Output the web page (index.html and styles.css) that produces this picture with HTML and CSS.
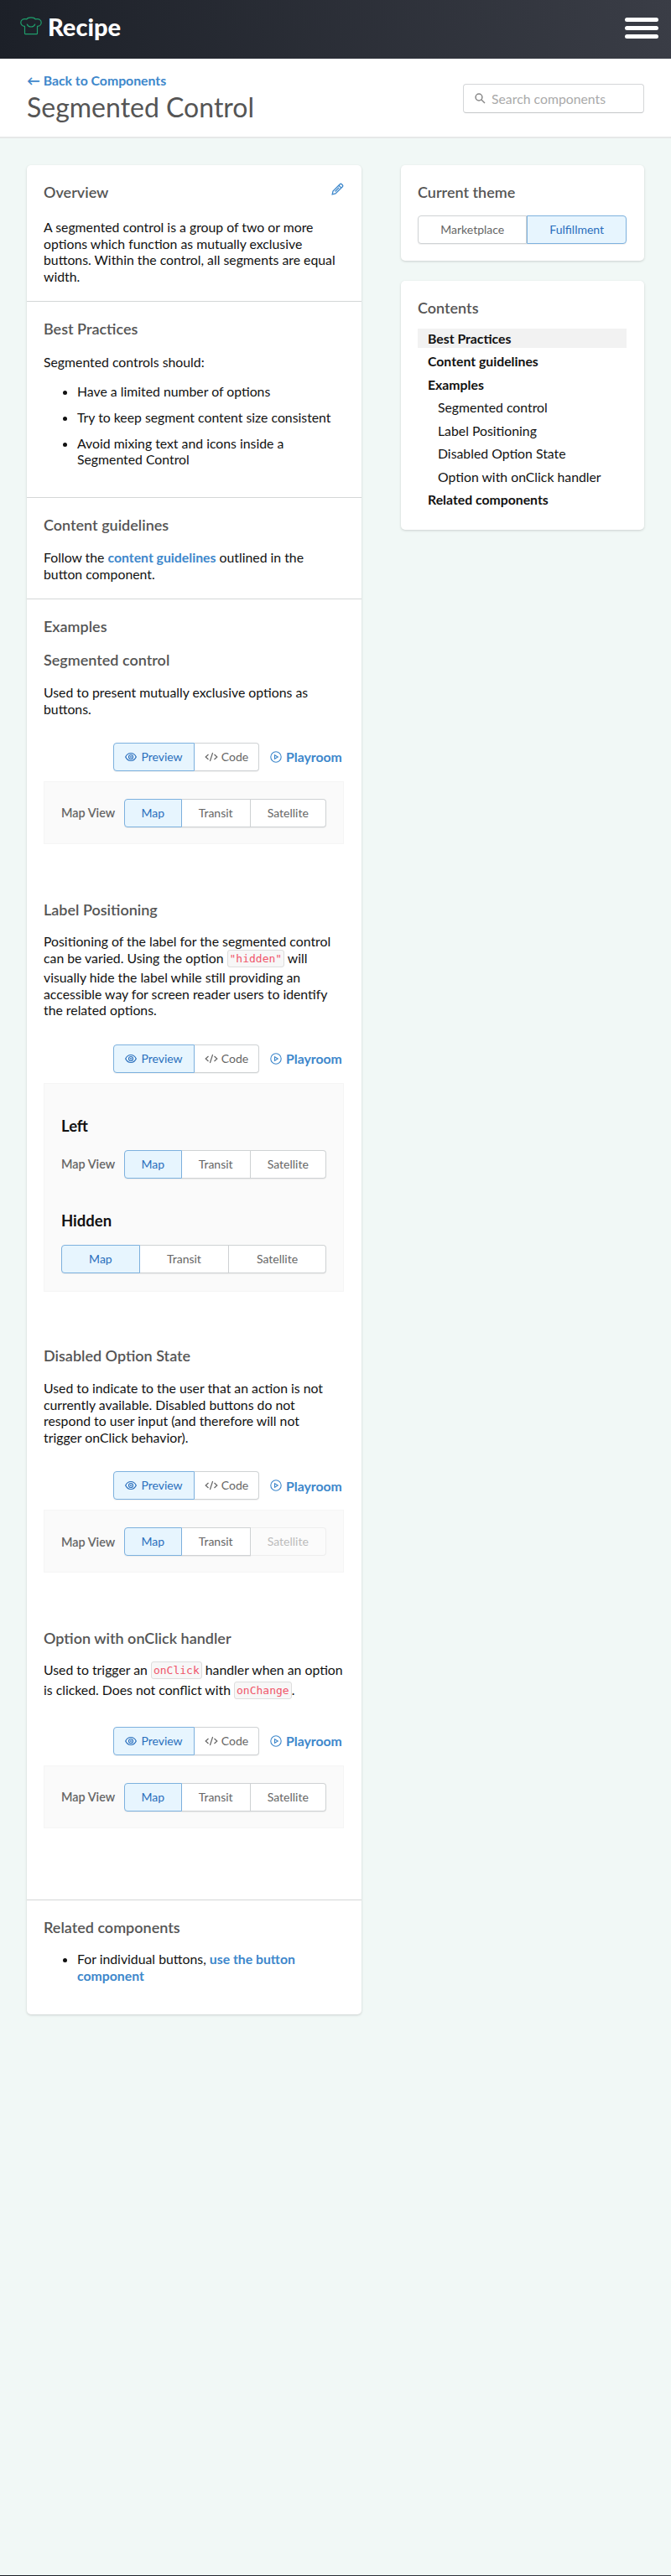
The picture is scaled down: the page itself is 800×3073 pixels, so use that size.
FILE: index.html
```html
<!DOCTYPE html>
<html lang="en">
<head>
<meta charset="utf-8">
<title>Segmented Control</title>
<link rel="stylesheet" href="styles.css">
</head>
<body>
<svg class="sprite" aria-hidden="true">
  <symbol id="eye" viewBox="0 0 14 12"><g fill="none" stroke="currentColor" stroke-width="1.2"><path d="M.7 6C2 3.2 4.200 1.500 7 1.500S12 3.200 13.300 6C12 8.800 9.800 10.500 7 10.500S2 8.800.7 6z"/><circle cx="7" cy="6" r="2.500"/></g><circle cx="7" cy="6" r=".9" fill="currentColor"/></symbol>
  <symbol id="code" viewBox="0 0 16 12"><path d="M4.500 3 1.200 6l3.300 3M11.500 3l3.300 3-3.300 3M9.600 1 6.400 11" fill="none" stroke="currentColor" stroke-width="1.200"/></symbol>
  <symbol id="play" viewBox="0 0 14 14"><circle cx="7" cy="7" r="6.200" fill="none" stroke="currentColor" stroke-width="1.100"/><path d="M5.500 4.700v4.600L9.300 7z" fill="none" stroke="currentColor" stroke-width="1.100"/></symbol>
</svg>
<header class="topbar">
  <div class="brand">
    <svg class="hat" viewBox="0 0 26 22"><g fill="none" stroke="#1f9d6b" stroke-width="1.200" stroke-linecap="round"><path d="M5.500 11.700v8q0 1 1 1h13q1 0 1-1v-8"/><path d="M5.500 11.300C2.500 11.300.8 9 .8 6.700.8 3.500 4 1.800 7.800 2.900 9.500.2 16.500.2 18.200 2.900 22 1.800 25.200 3.500 25.200 6.700c0 2.300-1.700 4.600-4.700 4.600"/><path d="M8.300 9c1.500 4 7.900 4 9.400 0"/></g></svg>
    <span class="brand-name">Recipe</span>
  </div>
  <div class="burger"><i></i><i></i><i></i></div>
</header>
<div class="pagehead">
  <div>
    <a class="back">← Back to Components</a>
    <h1>Segmented Control</h1>
  </div>
  <div class="search">
    <svg viewBox="0 0 13 13"><circle cx="5" cy="5" r="3.900"/><path d="M8 8l4 4"/></svg>
    <span>Search components</span>
  </div>
</div>
<div class="layout">
  <main class="card main">
    <section class="s-overview">
      <div class="row"><h2>Overview</h2><svg class="pencil" viewBox="0 0 15 15"><path d="M1.200 13.800l.8-3.800L10.300 1.700q1-.9 2 0l1 1q.9 1 0 2L5 13zM9 3.200l2.900 2.900M4.500 10.500l4.700-4.700"/></svg></div>
      <p>A segmented control is a group of two or more options which function as mutually exclusive buttons. Within the control, all segments are equal width.</p>
    </section>
    <section class="s-best">
      <h2>Best Practices</h2>
      <p>Segmented controls should:</p>
      <ul><li>Have a limited number of options</li><li>Try to keep segment content size consistent</li><li>Avoid mixing text and icons inside a Segmented Control</li></ul>
    </section>
    <section class="s-content">
      <h2>Content guidelines</h2>
      <p>Follow the <a>content guidelines</a> outlined in the button component.</p>
    </section>
    <section class="s-examples">
      <h2>Examples</h2>
      <article class="ex1">
        <h2>Segmented control</h2>
        <p>Used to present mutually exclusive options as buttons.</p>
        <div class="tools"><div class="seg"><span class="on"><svg class="eye"><use href="#eye"/></svg>Preview</span><span><svg class="code"><use href="#code"/></svg>Code</span></div><a class="playroom"><svg><use href="#play"/></svg>Playroom</a></div>
        <div class="preview"><div class="field"><label>Map View</label><div class="seg map"><span class="on">Map</span><span>Transit</span><span>Satellite</span></div></div></div>
      </article>
      <article class="ex2">
        <h2>Label Positioning</h2>
        <p>Positioning of the label for the segmented control can be varied. Using the option <code>"hidden"</code> will visually hide the label while still providing an accessible way for screen reader users to identify the related options.</p>
        <div class="tools"><div class="seg"><span class="on"><svg class="eye"><use href="#eye"/></svg>Preview</span><span><svg class="code"><use href="#code"/></svg>Code</span></div><a class="playroom"><svg><use href="#play"/></svg>Playroom</a></div>
        <div class="preview tall">
          <h3>Left</h3>
          <div class="field"><label>Map View</label><div class="seg map"><span class="on">Map</span><span>Transit</span><span>Satellite</span></div></div>
          <h3>Hidden</h3>
          <div class="seg map wide"><span class="on">Map</span><span>Transit</span><span>Satellite</span></div>
        </div>
      </article>
      <article class="ex3">
        <h2>Disabled Option State</h2>
        <p>Used to indicate to the user that an action is not currently available. Disabled buttons do not respond to user input (and therefore will not trigger onClick behavior).</p>
        <div class="tools"><div class="seg"><span class="on"><svg class="eye"><use href="#eye"/></svg>Preview</span><span><svg class="code"><use href="#code"/></svg>Code</span></div><a class="playroom"><svg><use href="#play"/></svg>Playroom</a></div>
        <div class="preview"><div class="field"><label>Map View</label><div class="seg map"><span class="on">Map</span><span>Transit</span><span class="off">Satellite</span></div></div></div>
      </article>
      <article class="ex4">
        <h2>Option with onClick handler</h2>
        <p>Used to trigger an <code>onClick</code> handler when an option is clicked. Does not conflict with <code>onChange</code>.</p>
        <div class="tools"><div class="seg"><span class="on"><svg class="eye"><use href="#eye"/></svg>Preview</span><span><svg class="code"><use href="#code"/></svg>Code</span></div><a class="playroom"><svg><use href="#play"/></svg>Playroom</a></div>
        <div class="preview"><div class="field"><label>Map View</label><div class="seg map"><span class="on">Map</span><span>Transit</span><span>Satellite</span></div></div></div>
      </article>
    </section>
    <section class="s-related">
      <h2>Related components</h2>
      <ul><li>For individual buttons, <a>use the button component</a></li></ul>
    </section>
  </main>
  <aside>
    <div class="card theme">
      <h2>Current theme</h2>
      <div class="seg theme-seg"><span>Marketplace</span><span class="on">Fulfillment</span></div>
    </div>
    <nav class="card toc">
      <h2>Contents</h2>
      <a class="current">Best Practices</a><a>Content guidelines</a><a>Examples</a><a class="sub">Segmented control</a><a class="sub">Label Positioning</a><a class="sub">Disabled Option State</a><a class="sub">Option with onClick handler</a><a>Related components</a>
    </nav>
  </aside>
</div>
<footer></footer>
</body>
</html>
```
FILE: styles.css
```css
* { box-sizing: border-box; }
body { margin: 0; height: 3073px; display: flex; flex-direction: column; background: #f1f8f6; font: 15.8px/19.6px Lato, sans-serif; color: #111; }
.sprite { display: none; }
h1, h2, h3, p, ul { margin: 0; }
.topbar { flex: none; height: 70px; padding: 0 15px 0 24px; display: flex; justify-content: space-between; align-items: flex-start; background: linear-gradient(80deg, #1c2028, #3a3d46); }
.brand { display: flex; align-items: flex-start; }
.hat { width: 26px; height: 22px; margin-top: 20px; }
.brand-name { margin: 16px 0 0 7px; font-size: 29px; line-height: 32px; font-weight: 900; color: #fff; }
.burger { width: 40px; margin-top: 21px; display: flex; flex-direction: column; gap: 5px; }
.burger i { height: 5px; border-radius: 3px; background: #fff; }
.pagehead { flex: none; height: 95px; padding: 16px 32px 0; display: flex; justify-content: space-between; background: #fff; border-bottom: 2px solid #e6e8e8; }
.back { display: block; line-height: 20px; }
a { color: #3d87cb; font-weight: 700; }
h1 { margin-top: 2px; font-size: 32px; line-height: 40px; font-weight: 400; color: #555; }
.search { width: 216px; height: 35px; margin-top: 14px; padding-left: 13px; display: flex; align-items: center; gap: 7px; border: 1px solid #d4d6d8; border-bottom-color: #c4c6c8; border-radius: 4px; color: #aaa; }
.search svg { width: 13px; height: 13px; fill: none; stroke: #888; stroke-width: 1.5; }
.layout { flex: 1; padding: 32px 32px 0; display: flex; justify-content: space-between; align-items: flex-start; }
.card { background: #fff; border-radius: 5px; box-shadow: 0 1px 3px rgba(0,0,0,.16); }
.main { width: 399px; }
h2 { font-size: 18px; line-height: 24px; font-weight: 600; color: #555; }
section { padding: 20px 21px 0 20px; border-bottom: 1px solid #d4d7d7; }
section:last-child { border: 0; }
.row { display: flex; justify-content: space-between; }
.pencil { width: 15px; height: 15px; margin-top: 1px; fill: none; stroke: #3d87cb; stroke-width: 1.3; }
.s-overview { height: 163px; }
.s-overview p { margin-top: 20px; }
.s-best { height: 234px; }
.s-best p { margin-top: 18px; }
ul { padding-left: 40px; }
.s-best ul { margin-top: 15px; }
li + li { margin-top: 11.4px; }
.s-content { height: 121px; }
.s-content p, article p { margin-top: 17px; }
.s-examples { height: 1552px; display: flex; flex-direction: column; }
.ex1 { margin-top: 16px; height: 298px; }
.ex2 { height: 532px; }
.ex2 p { margin-top: 16px; }
.ex3 { height: 337px; }
.ex3 p { padding-right: 24px; }
.ex4 p { margin: 16px -8px 0 0; }
.s-related { height: 136px; }
.s-related ul { margin-top: 16px; }
.tools { display: flex; justify-content: flex-end; align-items: center; margin-top: 31px; }
.seg { display: flex; height: 34px; font-size: 14px; line-height: 34px; color: #666; }
.seg span { display: flex; align-items: center; justify-content: center; background: #fff; border: 1px solid #cfd2d4; border-left-width: 0; box-shadow: 0 1px 1px rgba(0,0,0,.06); }
.seg span:first-child { border-left-width: 1px; border-radius: 4px 0 0 4px; }
.seg span:last-child { border-radius: 0 4px 4px 0; }
.seg .on { background: #e7f5fe; border-color: #7db1de; color: #2a6fbd; }
.tools .seg { width: 174px; }
.tools .seg .on { width: 97px; }
.tools .seg span { width: 77px; }
.eye { width: 14px; height: 12px; margin-right: 5px; }
.code { width: 16px; height: 12px; margin-right: 4px; }
.playroom { display: flex; align-items: center; width: 88px; margin-left: 13px; }
.playroom svg { flex: none; width: 14px; height: 14px; margin-right: 5px; }
.preview { height: 75px; margin-top: 12px; padding: 20px 20px 0; background: #fafafa; border: 1px solid #f5f5f5; }
.field { display: flex; justify-content: space-between; align-items: center; }
.field label { font-size: 14.4px; font-weight: 600; color: #666; }
.map { width: 241px; }
.map span:nth-child(1) { width: 28.5%; }
.map span:nth-child(2) { width: 34%; }
.map span:nth-child(3) { width: 37.5%; }
.wide { width: 316px; }
.wide span:nth-child(1) { width: 29.7%; }
.wide span:nth-child(2) { width: 33.6%; }
.wide span:nth-child(3) { width: 36.700%; }
.seg .off { background: #fbfbfb; border-color: #eee; color: #bbb; box-shadow: none; }
.tall { height: 249px; }
h3 { font-size: 18.5px; line-height: 24px; font-weight: 700; color: #111; }
.tall h3 { margin: 18px 0 17px; }
.tall .field + h3 { margin: 38px 0 17px; }
code { display: inline-block; overflow: hidden; height: 21px; margin-bottom: 2.4px; padding: 0 2px; vertical-align: -7.6px; font: 13px/19px "DejaVu Sans Mono", monospace; color: #f0556a; background: #f7f7f7; border: 1px solid #ddd; border-radius: 3px; }
aside { width: 290px; display: flex; flex-direction: column; gap: 24px; }
.theme { height: 114px; padding: 20px 21px 0 20px; }
.theme-seg { margin-top: 16px; }
.theme-seg span { width: 131px; }
.theme-seg .on { width: 119px; border-left-width: 1px; }
.toc { height: 297px; padding: 20px 21px 0 20px; }
.toc a { display: block; height: 23.500px; margin-bottom: 4px; padding-left: 12px; line-height: 23.500px; color: #111; font-weight: 700; }
.toc h2 { margin-bottom: 12.500px; }
.toc .sub { padding-left: 24px; font-weight: 400; }
.toc .current { background: #f2f2f2; }
footer { flex: none; height: 1px; background: linear-gradient(90deg, #1c2028, #3a3d46); }
```
